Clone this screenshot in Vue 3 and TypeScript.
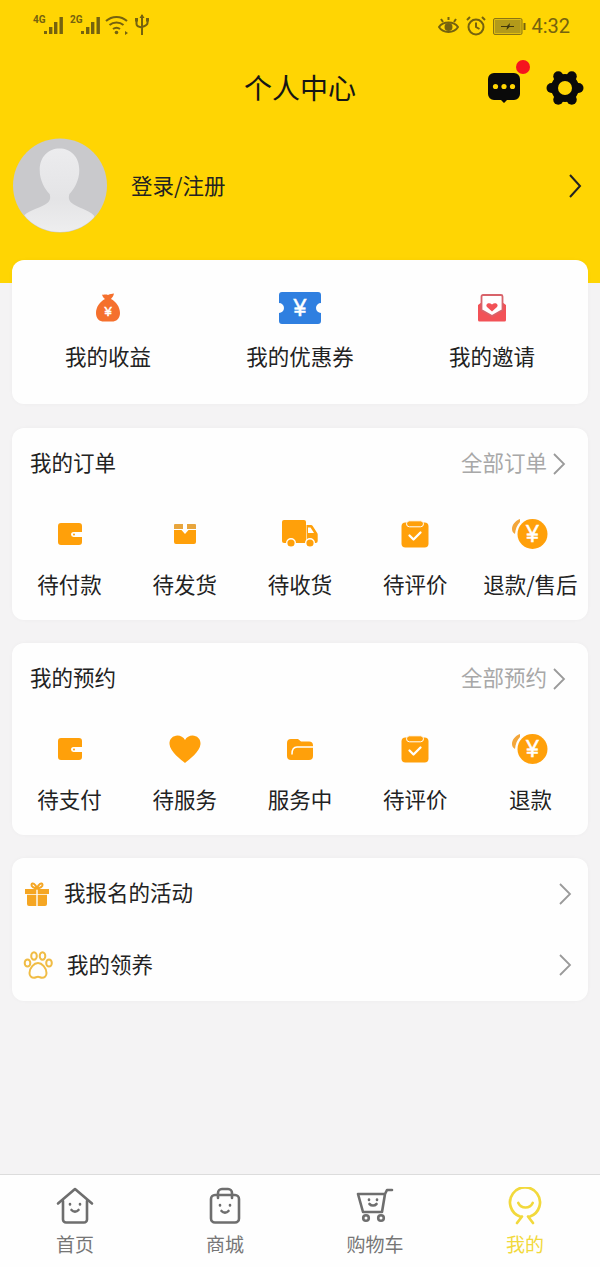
<script setup lang="ts">
const O = '#ffa00a'
const yen = (x: number, y: number, s: number) =>
  `<text x="${x}" y="${y}" font-size="${s}" font-family="Liberation Sans, sans-serif" text-anchor="middle" fill="#fff" stroke="#fff" stroke-width="0.5">¥</text>`

const icons: Record<string, string> = {
  bag: `<svg width="26" height="30" viewBox="0 0 26 30"><path fill="#f5702d" d="M7 1.500c2 .8 3-.6 6 .5 2.500-1.200 3.500-1 6-1.500-.5 2.500-1.800 4-3 5.500 5 2.500 9 8 9 14 0 6-4 8.500-8 8.500H9c-4.500 0-8-2.500-8-8.500 0-6 4-11.500 9-14C8.800 5 7.500 3.500 7 1.500z"/>${yen(13, 23, 13)}</svg>`,
  ticket: `<svg width="42" height="32" viewBox="0 0 42 32"><path fill="#2f7fe0" d="M3 0h36a3 3 0 0 1 3 3v8a5 5 0 0 0 0 10v8a3 3 0 0 1-3 3H3a3 3 0 0 1-3-3v-8a5 5 0 0 0 0-10V3a3 3 0 0 1 3-3z"/>${yen(21, 24, 23)}</svg>`,
  mail: `<svg width="30" height="28" viewBox="0 0 30 28"><path fill="#f25257" d="M1 11l4-3v8l10 6 10-6V8l4 3v15a1.500 1.500 0 0 1-1.500 1.500h-25A1.500 1.500 0 0 1 1 26z"/><path fill="#fff" stroke="#d8636a" stroke-width="1.800" d="M4.500 2.500a1.500 1.500 0 0 1 1.500-1.500h18a1.500 1.500 0 0 1 1.500 1.500V16L15 22 4.500 16z"/><path fill="#f25257" d="M15 17.500l-5-4.500c-2.200-2.500 1.800-5.500 5-2.500 3.200-3 7.200 0 5 2.500z"/></svg>`,
  wallet: `<svg width="24" height="22" viewBox="0 0 24 22"><path fill="${O}" d="M3 0h18a3 3 0 0 1 3 3v6h-8.500a2.500 2.500 0 0 0 0 5H24v5a3 3 0 0 1-3 3H3a3 3 0 0 1-3-3V3a3 3 0 0 1 3-3z"/><circle cx="16" cy="11.500" r="1" fill="${O}"/></svg>`,
  box: `<svg width="22" height="20" viewBox="0 0 22 20"><path fill="#e8a53c" d="M1 0h8v5H0V1a1 1 0 0 1 1-1zM13 0h8a1 1 0 0 1 1 1v4h-9z"/><path fill="${O}" d="M0 6h7.500l3.500 4 3.500-4H22v12a2 2 0 0 1-2 2H2a2 2 0 0 1-2-2z"/></svg>`,
  truck: `<svg width="36" height="28" viewBox="0 0 36 28"><path fill="${O}" d="M2 0h20a2 2 0 0 1 2 2v21H2a2 2 0 0 1-2-2V2a2 2 0 0 1 2-2z"/><path fill="${O}" d="M24.500 5h4.500a2 2 0 0 1 1.700 1l4.500 7c.3.500.500 1 .5 1.500V21a2 2 0 0 1-2 2h-9z"/><path fill="#fff" d="M26 7.500h2.500l3.500 5.500h-6z"/><circle cx="9" cy="23" r="4.300" fill="${O}" stroke="#fff" stroke-width="1.400"/><circle cx="28" cy="23" r="4.300" fill="${O}" stroke="#fff" stroke-width="1.400"/></svg>`,
  clip: `<svg width="28" height="28" viewBox="0 0 28 28"><rect x=".5" y="2.500" width="27" height="25" rx="4" fill="${O}"/><rect x="5.500" y=".8" width="17" height="6" rx="3" fill="${O}" stroke="#fff" stroke-width="1"/><path fill="none" stroke="#fff" stroke-width="2.300" stroke-linecap="round" stroke-linejoin="round" d="M8.500 15.500l4 4 7-7"/></svg>`,
  coin: `<svg width="38" height="32" viewBox="0 0 38 32"><path fill="#f3a63a" d="M9 1C4 3 1 7 1 11c0 2 1 4 3 5 .5-5 2-9 5-12z"/><circle cx="21.500" cy="16" r="15" fill="${O}"/>${yen(21.5, 24, 23)}</svg>`,
  heart: `<svg width="32" height="28" viewBox="0 0 32 28"><path fill="${O}" d="M16 28C12 24.500 1 17 .5 9 .2 4 4 .5 8.500.5c3 0 6 1.500 7.500 4.500C17.500 2 20.500.5 23.500.5 28 .5 31.800 4 31.500 9 31 17 20 24.500 16 28z"/></svg>`,
  folder: `<svg width="26" height="21" viewBox="0 0 26 21"><path fill="${O}" d="M4 0h7l3 2.500h8a4 4 0 0 1 4 4V17a4 4 0 0 1-4 4H4a4 4 0 0 1-4-4V4a4 4 0 0 1 4-4z"/><path fill="none" stroke="#fff" stroke-width="1.500" stroke-linecap="round" d="M5 15c0-4 1-7 5-7h16"/></svg>`,
  gift: `<svg width="24" height="24" viewBox="0 0 24 24"><path fill="#f5a623" d="M0 7h11.300v5H0zM12.700 7H24v5H12.700zM2 12.800h9.300V24H4a2 2 0 0 1-2-2zM12.700 12.800H22V22a2 2 0 0 1-2 2h-7.300z"/><path fill="none" stroke="#f5a623" stroke-width="2" d="M12 6.500C9 6 6 4.500 6.500 2.500 7.200.5 10.500 1.500 12 6.500zM12 6.500C15 6 18 4.500 17.500 2.500 16.800.5 13.500 1.500 12 6.500z"/></svg>`,
  paw: `<svg width="30" height="28" viewBox="0 0 30 28" fill="none" stroke="#f0bc45" stroke-width="2"><ellipse cx="4.500" cy="12" rx="2.800" ry="3.600"/><ellipse cx="11" cy="5" rx="2.800" ry="3.800"/><ellipse cx="19.500" cy="5" rx="2.800" ry="3.800"/><ellipse cx="26" cy="12" rx="2.800" ry="3.600"/><path d="M15 12c-4 0-8.500 5-8.500 10 0 3 2 4.800 4.500 4.800 1.500 0 2.500-1 4-1s2.500 1 4 1c2.500 0 4.500-1.800 4.500-4.800 0-5-4.500-10-8.500-10z"/></svg>`,
  home: `<svg width="38" height="38" viewBox="0 0 38 38" fill="none" stroke="#6e6e6e" stroke-width="2.600" stroke-linecap="round" stroke-linejoin="round"><path d="M2 16.500L19 2l17 14.500"/><path d="M7 14v18.500a3 3 0 0 0 3 3h18a3 3 0 0 0 3-3V14"/><path d="M14 17v.5M24 17v.5M15.500 23c2 2.200 5 2.200 7 0"/></svg>`,
  shop: `<svg width="38" height="38" viewBox="0 0 38 38" fill="none" stroke="#6e6e6e" stroke-width="2.600" stroke-linecap="round" stroke-linejoin="round"><rect x="5" y="8" width="28" height="27.500" rx="4"/><path d="M12 11V6a4 4 0 0 1 4-4h6a4 4 0 0 1 4 4v5"/><path d="M14 18v.5M24 18v.5M15.500 24c2 2.200 5 2.200 7 0"/></svg>`,
  cart: `<svg width="38" height="38" viewBox="0 0 38 38" fill="none" stroke="#6e6e6e" stroke-width="2.600" stroke-linecap="round" stroke-linejoin="round"><path d="M2 7h27L26 25H7zM29 7l2-4h5"/><path d="M13 12.500v.5M21 12.500v.5M13.500 17c2 2 5 2 7 0"/><circle cx="10" cy="31" r="2.800"/><circle cx="25" cy="31" r="2.800"/></svg>`,
  me: `<svg width="38" height="38" viewBox="0 0 38 38" fill="none" stroke="#f2d93c" stroke-width="2.700" stroke-linecap="round" stroke-linejoin="round"><path d="M14 29.500a15 15 0 1 1 10 0"/><path d="M12.300 16c3 6 11.400 6 14.400 0"/><path d="M16 29.500L11 36M22 29.500l5 6.500"/></svg>`,
}

interface Item { icon: string; label: string }
const perks: Item[] = [
  { icon: 'bag', label: '我的收益' },
  { icon: 'ticket', label: '我的优惠券' },
  { icon: 'mail', label: '我的邀请' },
]
const sections: { title: string; more: string; items: Item[] }[] = [
  {
    title: '我的订单',
    more: '全部订单',
    items: [
      { icon: 'wallet', label: '待付款' },
      { icon: 'box', label: '待发货' },
      { icon: 'truck', label: '待收货' },
      { icon: 'clip', label: '待评价' },
      { icon: 'coin', label: '退款/售后' },
    ],
  },
  {
    title: '我的预约',
    more: '全部预约',
    items: [
      { icon: 'wallet', label: '待支付' },
      { icon: 'heart', label: '待服务' },
      { icon: 'folder', label: '服务中' },
      { icon: 'clip', label: '待评价' },
      { icon: 'coin', label: '退款' },
    ],
  },
]
const rows = [
  { icon: 'gift', label: '我报名的活动', cls: 'first' },
  { icon: 'paw', label: '我的领养', cls: 'second' },
]
const tabs = [
  { icon: 'home', label: '首页', on: false },
  { icon: 'shop', label: '商城', on: false },
  { icon: 'cart', label: '购物车', on: false },
  { icon: 'me', label: '我的', on: true },
]
const lobes = [0, 60, 120, 180, 240, 300].map((a) => ({
  a,
  x: 19 + 13.5 * Math.cos((a * Math.PI) / 180),
  y: 18 + 13.5 * Math.sin((a * Math.PI) / 180),
}))
</script>

<template>
  <div class="page">
    <header class="hero">
      <div class="status">
        <div class="status-left">
          <span class="net">4G</span>
          <svg class="signal" width="20" height="19" viewBox="0 0 20 19"><path fill="#75620f" d="M0 15h3v3H0zM5 11h3.400v7H5zM10 6h3.400v12H10zM15.500 1h3.400v17h-3.400z"/></svg>
          <span class="net second-net">2G</span>
          <svg class="signal" width="20" height="19" viewBox="0 0 20 19"><path fill="#75620f" d="M0 15h3v3H0zM5 11h3.400v7H5zM10 6h3.400v12H10zM15.500 1h3.400v17h-3.400z"/></svg>
          <svg class="wifi" width="24" height="20" viewBox="0 0 24 20" fill="none" stroke="#75620f" stroke-width="2"><path d="M1 6c6-5.500 15-5.500 21 0M4.500 10c4-3.500 10-3.500 14 0M8 14c2-1.500 5-1.500 7 0"/><circle cx="11.500" cy="17.500" r="1.800" fill="#75620f" stroke="none"/><path d="M20 16l3 2-3 2z" fill="#75620f" stroke="none"/></svg>
          <svg class="usb" width="14" height="22" viewBox="0 0 14 22" fill="none" stroke="#75620f" stroke-width="2"><path d="M7 1v20M1.500 7v3c0 2 2 3 5.500 3.500M12.500 7v2c0 2-2 3-5.500 4"/><path d="M4.500 4L7 0l2.500 4z" fill="#75620f" stroke="none"/><rect x="0" y="4" width="3" height="3.500" fill="#75620f" stroke="none"/><rect x="11" y="4" width="3" height="3.500" fill="#75620f" stroke="none"/></svg>
        </div>
        <div class="status-right">
          <svg width="21" height="18" viewBox="0 0 21 18" fill="none" stroke="#75620f" stroke-width="2"><path d="M1 10c4-6 15-6 19 0-4 6.500-15 6.500-19 0z"/><circle cx="10.500" cy="10" r="3" fill="#75620f"/><path d="M3 2l2 3M10.500 0v3M18 2l-2 3"/></svg>
          <svg width="20" height="20" viewBox="0 0 20 20" fill="none" stroke="#75620f" stroke-width="2"><circle cx="10" cy="11" r="7.500"/><path d="M10 6.500V11l3.500 2M1 4l3-3M19 4l-3-3"/></svg>
          <svg width="33" height="17" viewBox="0 0 33 17"><rect x=".5" y=".5" width="28.500" height="16" rx="1.500" fill="#e0bd10" stroke="#8a7414"/><rect x="2" y="2" width="25.500" height="13" fill="#b39a1a"/><path fill="#3f360c" d="M8 8h6l3-3-.5 3H21v1h-4.500l-3 3 .5-3H8z"/><rect x="30.500" y="5" width="2" height="7" fill="#75620f"/></svg>
          <span class="clock">4:32</span>
        </div>
      </div>

      <div class="titlebar">
        <span></span>
        <h1 class="title">个人中心</h1>
        <div class="actions">
          <div class="msg">
            <svg width="32" height="30" viewBox="0 0 32 30"><path fill="#0a0a0a" d="M6 0h20a6 6 0 0 1 6 6v15a6 6 0 0 1-6 6h-7l-3 3-3-3H6a6 6 0 0 1-6-6V6a6 6 0 0 1 6-6z"/><circle cx="7.500" cy="13.500" r="2.600" fill="#ffd503"/><circle cx="16" cy="13.500" r="2.600" fill="#ffd503"/><circle cx="24.500" cy="13.500" r="2.600" fill="#ffd503"/></svg>
            <span class="dot"></span>
          </div>
          <svg width="38" height="36" viewBox="0 0 38 36">
            <circle cx="19" cy="18" r="14" fill="#0a0a0a" />
            <circle v-for="l in lobes" :key="l.a" :cx="l.x" :cy="l.y" r="5" fill="#0a0a0a" />
            <circle cx="19" cy="18" r="7" fill="#ffd503" />
          </svg>
        </div>
      </div>

      <div class="profile">
        <svg class="avatar" width="94" height="95" viewBox="0 0 95 95">
          <defs>
            <clipPath id="av"><circle cx="47.500" cy="47.500" r="47"/></clipPath>
            <linearGradient id="avfill" x1="0" y1="0" x2="0" y2="1"><stop offset="0" stop-color="#ececee"/><stop offset="0.6" stop-color="#e4e4e6"/><stop offset="1" stop-color="#eeeeef"/></linearGradient>
          </defs>
          <circle cx="47.500" cy="47.500" r="47.500" fill="#c9c9cc"/>
          <g clip-path="url(#av)">
            <path fill="url(#avfill)" d="M47 10c-11 0-20 8-20 22 0 10 5 19 10 24 1 3 1 6-2 9-6 5-18 7-24 13l-2 17h76l-3-17c-6-6-17-8-23-13-3-3-3-6-2-9 5-5 10-14 10-24 0-14-9-22-20-22z"/>
          </g>
        </svg>
        <span class="login">登录/注册</span>
        <svg class="profile-arrow" width="14" height="24" viewBox="0 0 14 24" fill="none" stroke="#222" stroke-width="2"><path d="M2 1l10 11L2 23"/></svg>
      </div>
    </header>

    <main class="content">
      <section class="card perks">
        <div v-for="p in perks" :key="p.label" class="cell">
          <span class="slot" v-html="icons[p.icon]"></span>
          <span class="cell-label">{{ p.label }}</span>
        </div>
      </section>

      <section v-for="s in sections" :key="s.title" class="card">
        <div class="head">
          <span class="head-title">{{ s.title }}</span>
          <span class="more">{{ s.more }}</span>
          <svg class="more-arrow" width="14" height="24" viewBox="0 0 14 24" fill="none" stroke="#9a9a9a" stroke-width="1.800"><path d="M2 2l10 10L2 22"/></svg>
        </div>
        <div class="grid">
          <div v-for="i in s.items" :key="i.label" class="cell">
            <span class="slot" v-html="icons[i.icon]"></span>
            <span class="cell-label">{{ i.label }}</span>
          </div>
        </div>
      </section>

      <section class="card">
        <div v-for="r in rows" :key="r.label" class="row" :class="r.cls">
          <span class="row-icon" v-html="icons[r.icon]"></span>
          <span class="row-label">{{ r.label }}</span>
          <svg width="14" height="24" viewBox="0 0 14 24" fill="none" stroke="#9a9a9a" stroke-width="1.800"><path d="M2 2l10 10L2 22"/></svg>
        </div>
      </section>
    </main>

    <nav class="tabs">
      <div v-for="t in tabs" :key="t.label" class="tab" :class="{ on: t.on }">
        <span class="tab-icon" v-html="icons[t.icon]"></span>
        <span class="tab-label">{{ t.label }}</span>
      </div>
    </nav>
  </div>
</template>

<style scoped>
.page {
  width: 600px;
  height: 1267px;
  display: flex;
  flex-direction: column;
  background: #f4f3f4;
  font-family: "Noto Sans CJK SC", "Noto Sans", sans-serif;
  color: #222;
  overflow: hidden;
}
.hero {
  height: 283px;
  flex: none;
  background: #ffd503;
}
.status {
  height: 50px;
  padding: 14px 30px 0 33px;
  display: flex;
  justify-content: space-between;
  align-items: flex-start;
  box-sizing: border-box;
}
.status-left {
  display: flex;
  align-items: flex-start;
}
.net {
  font: 700 10px/10px "Roboto", sans-serif;
  color: #75620f;
  width: 11px;
  margin-top: 1px;
}
.second-net {
  margin-left: 6px;
}
.signal {
  margin-top: 2px;
}
.wifi {
  margin: 1px 0 0 4px;
}
.usb {
  margin: 0 0 0 6px;
}
.status-right {
  display: flex;
  align-items: center;
  gap: 7px;
  height: 24px;
}
.clock {
  font: 400 20px/24px "Roboto", sans-serif;
  color: #75620f;
  margin-left: -2px;
}
.titlebar {
  height: 76px;
  display: grid;
  grid-template-columns: 1fr auto 1fr;
  align-items: center;
  padding: 0 16px;
}
.title {
  margin: 0 0 2px;
  font-size: 28px;
  font-weight: 400;
  color: #151515;
  line-height: 40px;
}
.actions {
  display: flex;
  justify-content: flex-end;
  align-items: center;
  gap: 26px;
}
.msg {
  position: relative;
  height: 30px;
}
.dot {
  position: absolute;
  top: -13px;
  right: -10px;
  width: 14px;
  height: 14px;
  border-radius: 50%;
  background: #f5141e;
}
.profile {
  margin-top: 12px;
  padding: 0 18px 0 13px;
  display: flex;
  align-items: center;
}
.avatar {
  flex: none;
}
.login {
  margin: 0 0 2px 24px;
  flex: 1;
  font-size: 21.500px;
  line-height: 30px;
}
.content {
  margin: -23px 12px 0;
  display: flex;
  flex-direction: column;
  gap: 23px;
}
.card {
  background: #fefefe;
  border-radius: 12px;
  box-shadow: 0 0 4px rgba(0, 0, 0, 0.03);
}
.perks {
  height: 144px;
  padding-top: 28px;
  box-sizing: border-box;
  display: grid;
  grid-template-columns: repeat(3, 1fr);
  margin-bottom: 1px;
}
.cell {
  display: flex;
  flex-direction: column;
  align-items: center;
}
.slot {
  height: 40px;
  display: flex;
  align-items: center;
  justify-content: center;
}
.perks .cell-label {
  margin-top: 13px;
}
.cell-label {
  margin-top: 14.500px;
  font-size: 21.500px;
  line-height: 30px;
  white-space: nowrap;
}
.head {
  height: 72px;
  padding: 0 22px 4px 18px;
  box-sizing: border-box;
  display: flex;
  align-items: center;
}
.head-title {
  flex: 1;
  font-size: 21.500px;
  line-height: 30px;
}
.more {
  margin-right: 5px;
  font-size: 21.500px;
  line-height: 30px;
  color: #a8a8a8;
}
.more-arrow {
  margin-top: 4px;
}
.grid {
  margin-top: 14px;
  padding-bottom: 21.500px;
  display: grid;
  grid-template-columns: repeat(5, 1fr);
}
.row {
  height: 71.500px;
  padding-right: 16px;
  display: flex;
  align-items: center;
}
.row-icon {
  display: flex;
  align-items: center;
}
.first .row-icon {
  margin-left: 13px;
}
.second .row-icon {
  margin-left: 11px;
}
.row-label {
  flex: 1;
  font-size: 21.500px;
  line-height: 30px;
  margin-bottom: 3px;
}
.first .row-label {
  margin-left: 15px;
}
.second .row-label {
  margin-left: 14px;
}
.tabs {
  margin-top: auto;
  height: 93px;
  box-sizing: border-box;
  border-top: 1px solid #dcdcdc;
  background: #fefefe;
  display: grid;
  grid-template-columns: repeat(4, 1fr);
  padding-top: 12px;
}
.tab {
  display: flex;
  flex-direction: column;
  align-items: center;
  color: #767676;
}
.tab-icon {
  height: 38px;
  display: flex;
}
.tab-label {
  margin-top: 6px;
  font-size: 19px;
  line-height: 26px;
}
.on {
  color: #f2d93c;
}
</style>

<style>
body {
  margin: 0;
}
</style>
